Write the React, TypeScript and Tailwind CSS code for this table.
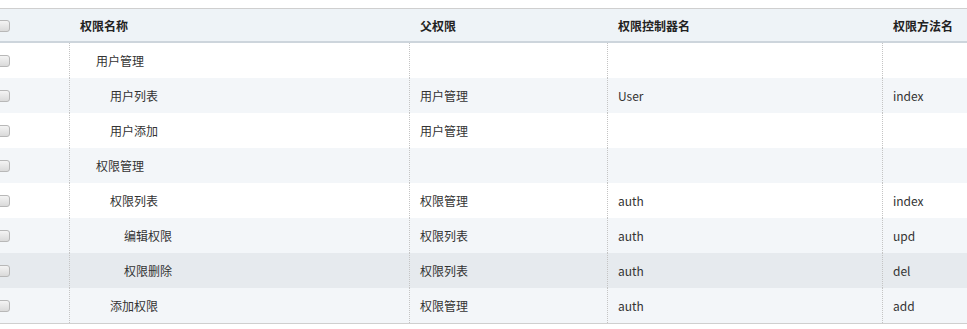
import React from "react";

type Row = {
    name: string;
    level: number;
    parent: string;
    ctrl: string;
    method: string;
};

const rows: Row[] = [
    { name: "用户管理", level: 1, parent: "", ctrl: "", method: "" },
    { name: "用户列表", level: 2, parent: "用户管理", ctrl: "User", method: "index" },
    { name: "用户添加", level: 2, parent: "用户管理", ctrl: "", method: "" },
    { name: "权限管理", level: 1, parent: "", ctrl: "", method: "" },
    { name: "权限列表", level: 2, parent: "权限管理", ctrl: "auth", method: "index" },
    { name: "编辑权限", level: 3, parent: "权限列表", ctrl: "auth", method: "upd" },
    { name: "权限删除", level: 3, parent: "权限列表", ctrl: "auth", method: "del" },
    { name: "添加权限", level: 2, parent: "权限管理", ctrl: "auth", method: "add" },
];

const indent: Record<number, string> = {
    1: "pl-[26px]",
    2: "pl-[40px]",
    3: "pl-[54px]",
};

const Check = () => (
    <span className="block ml-[-3px] w-[13px] h-[12px] rounded-[3px] border border-[#b8b8b8] bg-gradient-to-b from-[#f4f4f4] to-[#dadada]" />
);

const cols = "grid grid-cols-[69px_340px_198px_275px_1fr]";

const App = () => {
    return (
        <div
            className="w-[967px] h-[329px] bg-white overflow-hidden pt-2 text-[12px] text-[#333]"
            style={{ fontFamily: '"Noto Sans CJK SC", "Microsoft YaHei", sans-serif' }}
        >
            {/* Header */}
            <div className={`${cols} h-[35px] pt-[1px] border-t border-[#cfcfcf] border-b-2 border-b-[#cdd5dc] bg-[#eef3f7] font-bold text-[#222]`}>
                <div className="flex items-center">
                    <Check />
                </div>
                <div className="flex items-center pl-[11px]">权限名称</div>
                <div className="flex items-center pl-[11px]">父权限</div>
                <div className="flex items-center pl-[11px]">权限控制器名</div>
                <div className="flex items-center pl-[11px]">权限方法名</div>
            </div>

            {/* Body */}
            {rows.map((r, i) => {
                const bg = i === 6 ? "bg-[#e6eaee]" : i % 2 === 1 ? "bg-[#f3f6f9]" : "bg-white";
                return (
                    <div key={i} className={`${cols} h-[35px] ${bg}`}>
                        <div className="flex items-center">
                            <Check />
                        </div>
                        <div className={`flex items-center border-l border-dotted border-[#c4c4c4] ${indent[r.level]}`}>
                            {r.name}
                        </div>
                        <div className="flex items-center border-l border-dotted border-[#c4c4c4] pl-[10px]">
                            {r.parent}
                        </div>
                        <div className="flex items-center border-l border-dotted border-[#c4c4c4] pl-[10px]">
                            {r.ctrl}
                        </div>
                        <div className="flex items-center border-l border-dotted border-[#c4c4c4] pl-[10px]">
                            {r.method}
                        </div>
                    </div>
                );
            })}
            <div className="border-t border-[#cfcfcf]" />
        </div>
    );
};

export default App;
